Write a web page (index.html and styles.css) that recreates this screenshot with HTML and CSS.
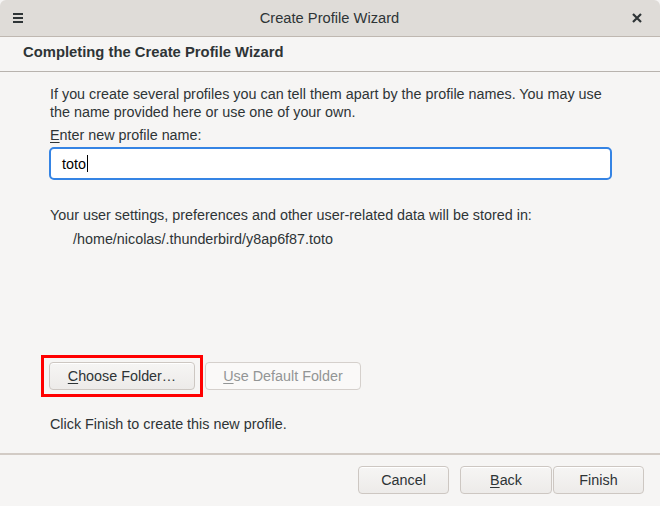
FILE: index.html
```html
<!DOCTYPE html>
<html>
<head>
<meta charset="utf-8">
<link rel="stylesheet" href="styles.css">
</head>
<body>
<div class="window">
  <div class="titlebar">
    <span class="menu-icon">
      <svg width="10" height="10" viewBox="0 0 10 10"><rect x="0" y="0" width="10" height="2" fill="#2e3436"/><rect x="0" y="4" width="10" height="2" fill="#2e3436"/><rect x="0" y="8" width="10" height="2" fill="#2e3436"/></svg>
    </span>
    <span class="title">Create Profile Wizard</span>
    <span class="close-icon">
      <svg width="10" height="10" viewBox="0 0 10 10"><path d="M1 1 L9 9 M9 1 L1 9" stroke="#2e3436" stroke-width="2.2"/></svg>
    </span>
  </div>
  <div class="header">Completing the Create Profile Wizard</div>
  <div class="content">
    <p class="intro">If you create several profiles you can tell them apart by the profile names. You may use the name provided here or use one of your own.</p>
    <p class="label"><u>E</u>nter new profile name:</p>
    <div class="input"><span>toto</span><span class="caret"></span></div>
    <p class="storage">Your user settings, preferences and other user-related data will be stored in:</p>
    <p class="path">/home/nicolas/.thunderbird/y8ap6f87.toto</p>
    <div class="spacer"></div>
    <div class="folder-row">
      <div class="highlight"><button class="btn choose"><u>C</u>hoose Folder…</button></div>
      <button class="btn disabled"><u>U</u>se Default Folder</button>
    </div>
    <p class="finish-note">Click Finish to create this new profile.</p>
  </div>
  <div class="footer">
    <button class="btn cancel">Cancel</button>
    <div class="pair">
      <button class="btn back"><u>B</u>ack</button>
      <button class="btn finish">Finish</button>
    </div>
  </div>
</div>
</body>
</html>
```
FILE: styles.css
```css
* { box-sizing: border-box; }
html, body { margin: 0; padding: 0; }
body {
  width: 660px;
  height: 506px;
  background: #f6f5f4;
  font-family: "Liberation Sans", Arial, sans-serif;
  color: #2e3436;
  overflow: hidden;
}
.window {
  width: 660px;
  height: 506px;
  display: flex;
  flex-direction: column;
  background: #f6f5f4;
  border-radius: 6px 6px 0 0;
  overflow: hidden;
}
.titlebar {
  height: 37px;
  flex: none;
  background: #dfdcd8;
  border-bottom: 1px solid #bfb8b1;
  display: flex;
  align-items: center;
  justify-content: space-between;
  padding: 0 18px 0 13px;
}
.menu-icon, .close-icon { display: flex; width: 10px; height: 10px; }
.title {
  font-size: 14.7px;
  color: #2e3436;
  margin-left: 4px;
}
.header {
  height: 35px;
  flex: none;
  border-bottom: 1px solid #b8b3ae;
  font-weight: bold;
  font-size: 14.8px;
  padding: 7px 0 0 23px;
  color: #2e3436;
}
.content {
  flex: 1;
  display: flex;
  flex-direction: column;
  padding: 13px 49px 0 50px;
  font-size: 14.35px;
}
p { margin: 0; }
.intro { line-height: 18px; width: 565px; }
.label { margin-top: 5px; line-height: 18px; }
u { text-decoration: underline; text-underline-offset: 2px; }
.input {
  margin-top: 3px;
  margin-left: -1px;
  width: 563px;
  height: 33px;
  background: #fff;
  border: 2px solid #3584e4;
  border-radius: 5px;
  padding: 0 0 0 11px;
  display: flex;
  align-items: center;
  font-size: 14.35px;
  color: #000;
}
.caret { width: 1px; height: 17px; background: #000; margin-left: 1px; }
.storage { margin-top: 26px; line-height: 18px; }
.path { margin-top: 6px; padding-left: 23px; line-height: 18px; }
.spacer { flex: 1; }
.folder-row {
  display: flex;
  align-items: center;
  gap: 2px;
  margin-left: -9px;
}
.highlight {
  border: 3px solid #ff0000;
  padding: 4px 5px;
}
.btn {
  font-family: inherit;
  font-size: 14.35px;
  height: 28px;
  border: 1px solid #cdc7c2;
  border-radius: 4px;
  background: linear-gradient(#f6f5f4, #edebe9);
  color: #2e3436;
  padding: 0;
  box-shadow: inset 0 1px #fff;
}
.choose { width: 146px; }
.disabled {
  width: 156px;
  background: #faf9f8;
  color: #929595;
  border-color: #d5d0cc;
  box-shadow: none;
}
.finish-note { margin-top: 18px; line-height: 18px; margin-bottom: 20px; }
.footer {
  flex: none;
  height: 53px;
  border-top: 2px solid #d2cbc5;
  display: flex;
  justify-content: flex-end;
  align-items: flex-start;
  padding: 11px 16px 0 0;
  gap: 11px;
}
.pair { display: flex; gap: 1px; }
.cancel { width: 91px; }
.back { width: 92px; }
.finish { width: 91px; }
```
